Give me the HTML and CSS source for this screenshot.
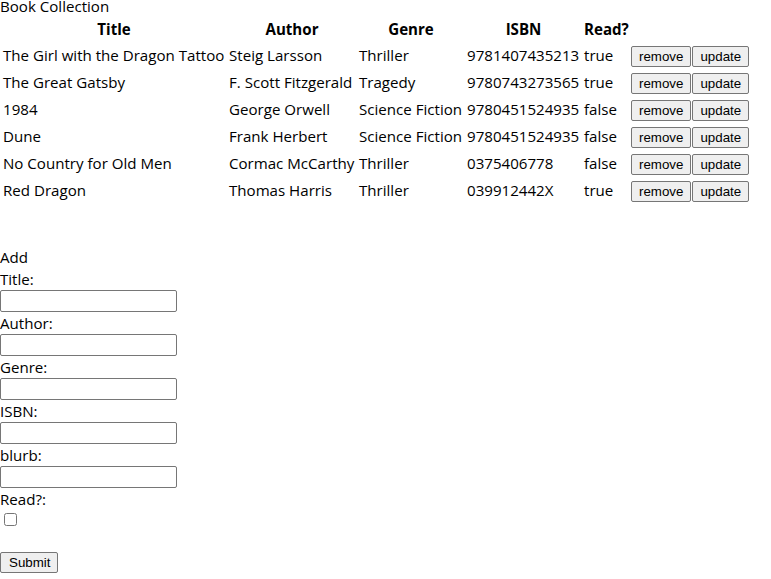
FILE: index.html
```html
<!DOCTYPE html>
<html>
<head>
<meta charset="utf-8">
<link rel="stylesheet" href="styles.css">
</head>
<body>
<div class="heading">Book Collection</div>
<table class="books">
  <thead>
    <tr>
      <th class="c-title">Title</th>
      <th class="c-author">Author</th>
      <th class="c-genre">Genre</th>
      <th class="c-isbn">ISBN</th>
      <th class="c-read">Read?</th>
      <th class="c-act"></th>
    </tr>
  </thead>
  <tbody>
    <tr><td>The Girl with the Dragon Tattoo</td><td>Steig Larsson</td><td>Thriller</td><td>9781407435213</td><td>true</td><td class="act"><button class="btn">remove</button><button class="btn">update</button></td></tr>
    <tr><td>The Great Gatsby</td><td>F. Scott Fitzgerald</td><td>Tragedy</td><td>9780743273565</td><td>true</td><td class="act"><button class="btn">remove</button><button class="btn">update</button></td></tr>
    <tr><td>1984</td><td>George Orwell</td><td>Science Fiction</td><td>9780451524935</td><td>false</td><td class="act"><button class="btn">remove</button><button class="btn">update</button></td></tr>
    <tr><td>Dune</td><td>Frank Herbert</td><td>Science Fiction</td><td>9780451524935</td><td>false</td><td class="act"><button class="btn">remove</button><button class="btn">update</button></td></tr>
    <tr><td>No Country for Old Men</td><td>Cormac McCarthy</td><td>Thriller</td><td>0375406778</td><td>false</td><td class="act"><button class="btn">remove</button><button class="btn">update</button></td></tr>
    <tr><td>Red Dragon</td><td>Thomas Harris</td><td>Thriller</td><td>039912442X</td><td>true</td><td class="act"><button class="btn">remove</button><button class="btn">update</button></td></tr>
  </tbody>
</table>
<form class="add-form">
  <div class="add">Add</div>
  <label class="line">Title:</label>
  <input class="field" type="text">
  <label class="line">Author:</label>
  <input class="field" type="text">
  <label class="line">Genre:</label>
  <input class="field" type="text">
  <label class="line">ISBN:</label>
  <input class="field" type="text">
  <label class="line">blurb:</label>
  <input class="field" type="text">
  <label class="line">Read?:</label>
  <div class="check-line"><input class="check" type="checkbox"></div>
  <button class="submit" type="button">Submit</button>
</form>
</body>
</html>
```
FILE: styles.css
```css
html, body {
  margin: 0;
  padding: 0;
  background: #fff;
}
body {
  font-family: "Open Sans", "Noto Sans", sans-serif;
  font-size: 15.1px;
  color: #000;
}
.heading {
  line-height: 21px;
  height: 16px;
  margin-top: -4px;
}
.books {
  border-collapse: separate;
  border-spacing: 2px;
  table-layout: fixed;
  width: 752px;
  margin-top: 4px;
}
.books th, .books td {
  padding: 1px;
  line-height: 21px;
  white-space: nowrap;
  text-align: left;
}
.books th {
  font-weight: bold;
  text-align: center;
}
.books td {
  height: 23px;
}
.c-title { width: 222px; }
.c-author { width: 126px; }
.c-genre { width: 104px; }
.c-isbn { width: 113px; }
.c-read { width: 43px; }
.c-act { width: 118px; }
.btn {
  font-family: "Liberation Sans", Arial, sans-serif;
  font-size: 13.33px;
  background: #efefef;
  border: 1px solid #767676;
  border-radius: 2px;
  color: #000;
  height: 21px;
  padding: 0 7px;
  margin: 0;
  line-height: 17px;
  vertical-align: middle;
}
.btn + .btn {
  margin-left: 1px;
}
.add-form {
  display: flex;
  flex-direction: column;
  align-items: flex-start;
  margin-top: 42px;
}
.add {
  line-height: 21px;
}
.line {
  display: block;
  line-height: 22px;
}
.field {
  display: block;
  box-sizing: border-box;
  width: 177px;
  height: 22px;
  margin: 0;
  border: 1px solid #767676;
  border-radius: 2px;
  padding: 1px 2px;
}
.check-line {
  height: 42px;
}
.check {
  margin: 3px 3px 3px 4px;
  width: 13px;
  height: 13px;
}
.submit {
  font-family: "Liberation Sans", Arial, sans-serif;
  font-size: 13.33px;
  background: #efefef;
  border: 1px solid #767676;
  border-radius: 2px;
  color: #000;
  height: 21px;
  padding: 1px 7px 1px 8px;
  margin: 0;
}
```
